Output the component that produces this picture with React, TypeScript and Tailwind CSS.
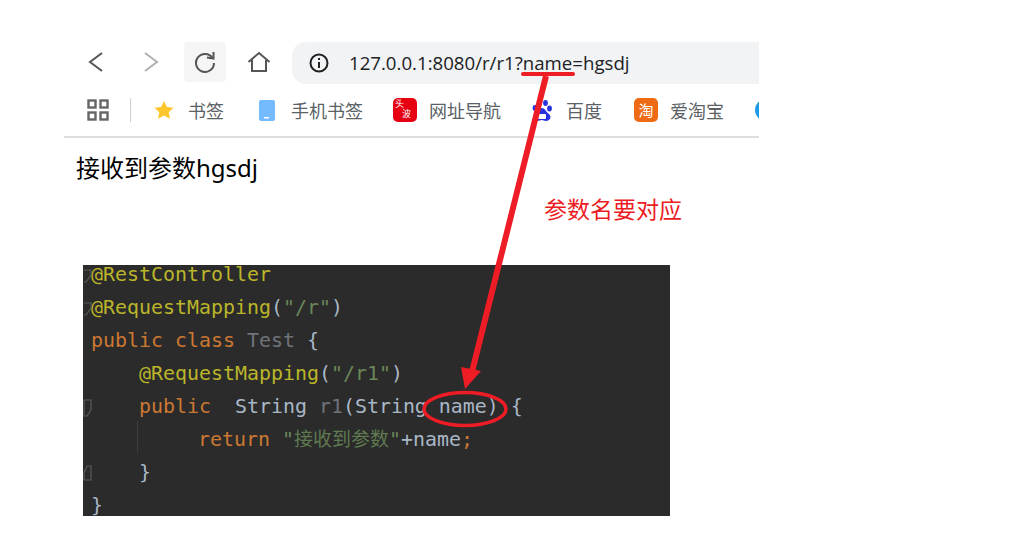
const cjk = { fontFamily: '"Noto Sans CJK SC", "Noto Sans", sans-serif' };
const mono = { fontFamily: '"DejaVu Sans Mono", "Noto Sans CJK SC", monospace' };

function Grid() {
  return (
    <svg width="22" height="22" viewBox="0 0 22 22" fill="none" stroke="#666" strokeWidth="2.4">
      <rect x="1.5" y="1.5" width="7" height="7" />
      <rect x="13.5" y="1.5" width="7" height="7" />
      <rect x="1.5" y="13.5" width="7" height="7" />
      <rect x="13.5" y="13.5" width="7" height="7" />
    </svg>
  );
}

function Bookmark({ label, icon, iconW, gap, width, ml }: { label: string; icon: React.ReactNode; iconW: string; gap: string; width: string; ml: string }) {
  return (
    <div className={`flex items-center shrink-0 ${ml}`}>
      <div className={`flex justify-center ${iconW}`}>{icon}</div>
      <span className={`text-[18px] text-[#5b5f66] whitespace-nowrap ${gap} ${width}`} style={cjk}>{label}</span>
    </div>
  );
}

function CodeLine({ children }: { children: React.ReactNode }) {
  return <div className="h-[33px] leading-[33px] whitespace-pre text-[19.93px] text-[#a9b7c6]" style={mono}>{children}</div>;
}

export default function App() {
  return (
    <div className="relative w-[1036px] h-[554px] bg-white overflow-hidden">
      <div className="ml-[64px] w-[695px] pt-[42px] overflow-hidden">
        {/* toolbar */}
        <div className="flex h-[42px] items-start">
          <div className="w-[120px] h-[40px] flex items-center shrink-0">
            <svg className="ml-[23px]" width="18" height="22" viewBox="0 0 18 22" fill="none" stroke="#555" strokeWidth="2"><path d="M15 2 L3 11 L15 20" /></svg>
            <svg className="ml-[37px]" width="18" height="22" viewBox="0 0 18 22" fill="none" stroke="#b0b0b0" strokeWidth="2"><path d="M3 2 L15 11 L3 20" /></svg>
          </div>
          <div className="w-[42px] h-[40px] bg-[#f5f5f5] rounded-[4px] flex items-center justify-center shrink-0">
            <svg width="22" height="22" viewBox="0 0 22 22" fill="none" stroke="#555" strokeWidth="2"><path d="M18.5 7 A9 9 0 1 0 20 12" /><path d="M13 6.5 L19.5 7.5 L19.5 1" strokeWidth="2" /></svg>
          </div>
          <div className="w-[66px] h-[40px] flex items-center justify-center shrink-0">
            <svg width="24" height="22" viewBox="0 0 24 22" fill="none" stroke="#555" strokeWidth="2"><path d="M1.5 11 L12 2 L22.5 11" /><path d="M5 9 V20 H19 V9" /></svg>
          </div>
          <div className="flex-1 h-[42px] bg-[#f1f3f4] rounded-l-[14px] flex items-center">
            <svg className="ml-[17px]" width="20" height="20" viewBox="0 0 20 20" fill="none" stroke="#222" strokeWidth="2"><circle cx="10" cy="10" r="8.5" /><path d="M10 9 V15" /><path d="M10 5 V7" /></svg>
            <span className="ml-[20px] text-[18.65px] text-[#202124] whitespace-nowrap" style={{ fontFamily: '"Open Sans", sans-serif' }}>127.0.0.1:8080/r/r1?name=hgsdj</span>
          </div>
        </div>
        {/* bookmarks bar */}
        <div className="flex items-center h-[54px] border-b-2 border-[#dedede]">
          <div className="ml-[23px] shrink-0 flex"><Grid /></div>
          <div className="ml-[21px] w-px h-[24px] bg-[#cfcfcf] shrink-0" />
          <Bookmark ml="ml-[23px]" iconW="w-[20px]" gap="ml-[14px]" width="w-[36px]" label="书签" icon={
            <svg width="21" height="20" viewBox="0 0 21 20"><path d="M10.5 0.5 L13.6 6.8 L20.5 7.6 L15.4 12.3 L16.8 19.3 L10.5 15.8 L4.2 19.3 L5.6 12.3 L0.5 7.6 L7.4 6.8 Z" fill="#fdc62a" /></svg>
          } />
          <Bookmark ml="ml-[35px]" iconW="w-[16px]" gap="ml-[16px]" width="w-[72px]" label="手机书签" icon={
            <svg width="16" height="21" viewBox="0 0 16 21"><rect width="16" height="21" rx="2" fill="#73baff" /><rect x="5" y="17" width="5" height="1.5" fill="#fff" /></svg>
          } />
          <Bookmark ml="ml-[30px]" iconW="w-[24px]" gap="ml-[12px]" width="w-[72px]" label="网址导航" icon={
            <div className="w-[24px] h-[24px] rounded-[5px] bg-[#e60012] text-white text-[9px] leading-[10px] pt-[1px] pl-[2px]" style={cjk}>
              <div>头</div>
              <div className="pl-[7px]">波</div>
            </div>
          } />
          <Bookmark ml="ml-[31px]" iconW="w-[20px]" gap="ml-[14px]" width="w-[37px]" label="百度" icon={
            <svg width="20" height="23" viewBox="0 0 20 23" fill="#2932e1"><ellipse cx="3" cy="9" rx="2.4" ry="3" /><ellipse cx="7.5" cy="3.5" rx="2.4" ry="3" /><ellipse cx="13.5" cy="4" rx="2.4" ry="3" /><ellipse cx="17.5" cy="9.5" rx="2.4" ry="3" /><path d="M10 9 C13 9 14 13 17 15 C20 18 18 22 14 22 C12 22 11 21 10 21 C8 21 7 22 5 22 C1 22 0 18 3 15 C6 13 7 9 10 9 Z" /><rect x="6" y="15" width="8" height="5" rx="1" fill="#fff" /></svg>
          } />
          <Bookmark ml="ml-[31px]" iconW="w-[24px]" gap="ml-[12px]" width="w-[54px]" label="爱淘宝" icon={
            <div className="w-[24px] h-[24px] rounded-[5px] bg-[#ef6a14] text-white text-[15px] leading-[24px] text-center" style={cjk}>淘</div>
          } />
          <div className="ml-[31px] shrink-0 w-[22px] h-[22px] rounded-full bg-[#1e9be8]" />
        </div>
        <p className="ml-[12px] mt-[12px] text-[24px] leading-[36px] text-black whitespace-nowrap" style={{ fontFamily: '"Noto Sans", "Noto Sans CJK SC", sans-serif' }}>接收到参数hgsdj</p>
      </div>

      <div className="ml-[544px] mt-[6px] text-[23px] leading-[32px] text-[#ec1c24] whitespace-nowrap" style={cjk}>参数名要对应</div>

      {/* code panel */}
      <div className="relative ml-[83px] mt-[41px] w-[587px] h-[251px] bg-[#2b2b2b] overflow-hidden">
        <div className="-mt-[7px] pl-[8px]">
          <CodeLine><span className="text-[#bbb529]">@RestController</span></CodeLine>
          <CodeLine><span className="text-[#bbb529]">@RequestMapping</span>(<span className="text-[#6a8759]">"/r"</span>)</CodeLine>
          <CodeLine><span className="text-[#cc7832]">public class </span><span className="text-[#6f737a]">Test</span> {"{"}</CodeLine>
          <CodeLine>{"    "}<span className="text-[#bbb529]">@RequestMapping</span>(<span className="text-[#6a8759]">"/r1"</span>)</CodeLine>
          <CodeLine>{"    "}<span className="text-[#cc7832]">public</span>{"  String "}<span className="text-[#6f737a]">r1</span>(String name) {"{"}</CodeLine>
          <CodeLine>{"         "}<span className="inline-block -ml-px text-[#cc7832]">return </span><span className="text-[#6a8759]">"<span className="text-[19px] text-[#5f7a50]">接收到参数</span>"</span>+name<span className="text-[#cc7832]">;</span></CodeLine>
          <CodeLine>{"    }"}</CodeLine>
          <CodeLine>{"}"}</CodeLine>
        </div>
        <div className="absolute left-[54px] top-[156px] w-px h-[32px] bg-[#3d3d3d]" />
        <svg className="absolute left-0 top-0" width="10" height="251" viewBox="0 0 10 251" fill="none" stroke="#5a5a5a" strokeWidth="1.2">
          <path d="M1 5 H8 V10 L3 17 H1" />
          <path d="M1 38 H8 V43 L3 50 H1" />
          <path d="M1 135 H8 V145 L4 151 H1 Z" />
          <path d="M1 208 L4 201 H8 V215 H1 Z" />
        </svg>
      </div>

      {/* annotations */}
      <svg className="absolute left-0 top-0" width="1036" height="554" viewBox="0 0 1036 554" fill="none">
        <path d="M523 74 H573" stroke="#ee1c25" strokeWidth="4" strokeLinecap="round" />
        <path d="M546 76 L472 372" stroke="#ee1c25" strokeWidth="6" />
        <path d="M465 389 L461 367 L481 371 Z" fill="#ee1c25" />
        <ellipse cx="465" cy="409" rx="41" ry="16.5" stroke="#ee1c25" strokeWidth="3.5" />
      </svg>
    </div>
  );
}
